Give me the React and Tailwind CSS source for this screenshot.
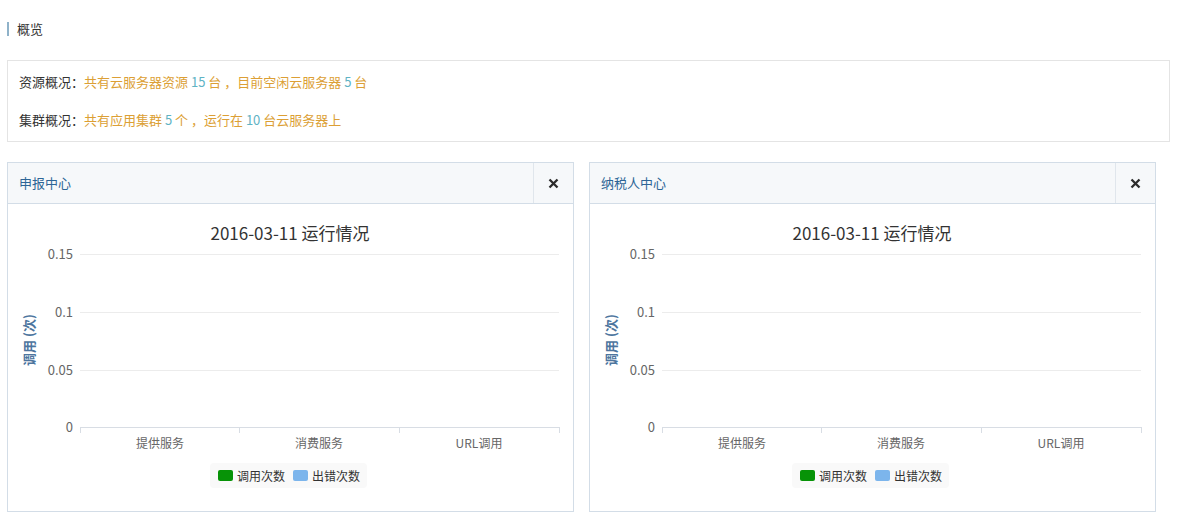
const FONT = '"Noto Sans CJK SC", "Noto Sans", sans-serif';

const categories = [
  { label: '提供服务', x: 152 },
  { label: '消费服务', x: 311 },
  { label: 'URL调用', x: 471 },
];

const yTicks = [
  { label: '0.15', y: 50 },
  { label: '0.1', y: 108 },
  { label: '0.05', y: 166 },
  { label: '0', y: 223 },
];

function RunChart() {
  return (
    <svg width="564" height="306" viewBox="0 0 564 306" style={{ fontFamily: FONT }}>
      <text x="282" y="36" textAnchor="middle" fontSize="17" fill="#333">
        2016-03-11 运行情况
      </text>

      {yTicks.slice(0, 3).map((t) => (
        <line key={t.label} x1="72" x2="551" y1={t.y + 0.5} y2={t.y + 0.5} stroke="#ececec" />
      ))}
      {yTicks.map((t) => (
        <text key={t.label} x="65" y={t.y + 5} textAnchor="end" fontSize="13" fill="#666">
          {t.label}
        </text>
      ))}

      <line x1="72" x2="551" y1="223.5" y2="223.5" stroke="#d8dde4" />
      {[72, 231, 391, 551].map((x) => (
        <line key={x} x1={x + 0.5} x2={x + 0.5} y1="223" y2="229" stroke="#d8dde4" />
      ))}
      {categories.map((c) => (
        <text key={c.label} x={c.x} y="244" textAnchor="middle" fontSize="12" fill="#666">
          {c.label}
        </text>
      ))}

      <text
        transform="translate(26 136) rotate(-90)"
        textAnchor="middle"
        fontSize="13"
        fontWeight="bold"
        fill="#4d759e"
      >
        调用 (次)
      </text>

      <rect x="202" y="259" width="157" height="25" rx="4" fill="#f9f9f9" />
      <rect x="210" y="266" width="15" height="11" rx="2" fill="#079307" />
      <text x="229" y="277" fontSize="12" fill="#333">调用次数</text>
      <rect x="285" y="266" width="15" height="11" rx="2" fill="#7cb5ec" />
      <text x="304" y="277" fontSize="12" fill="#333">出错次数</text>
    </svg>
  );
}

function Panel({ title }) {
  return (
    <div className="w-[567px] border border-[#d3dde7] bg-white">
      <div className="flex h-[41px] items-stretch justify-between border-b border-[#d3dde7] bg-[#f6f8fa]">
        <span className="flex items-center pl-[11px] text-[13px] text-[#2d6596]">{title}</span>
        <button className="flex w-[40px] items-center justify-center border-l border-[#e0e6ec]">
          <svg width="11" height="11" viewBox="0 0 11 11">
            <path d="M1.5 1.5 L9.5 9.5 M9.5 1.5 L1.5 9.5" stroke="#2b2b2b" strokeWidth="2.3" />
          </svg>
        </button>
      </div>
      <div className="h-[307px]">
        <RunChart />
      </div>
    </div>
  );
}

export default function App() {
  return (
    <div className="min-h-[525px] w-[1181px] bg-white pl-[7px] pt-[21px]" style={{ fontFamily: FONT }}>
      <div className="flex h-[15px] items-center">
        <span className="h-[14px] w-[2px] bg-[#8fb2c9]" />
        <span className="ml-[8px] text-[13px] leading-none text-[#333]">概览</span>
      </div>

      <div className="mt-[24px] flex w-[1163px] flex-col gap-[18px] border border-[#e4e4e4] px-[11px] pb-[11px] pt-[11px] text-[13px] leading-[20px]">
        <div>
          <span className="text-[#333]">资源概况：</span>
          <span className="text-[#dc9f35]">共有云服务器资源 </span>
          <span className="text-[#5fb3c4]">15</span>
          <span className="text-[#dc9f35]"> 台 ，目前空闲云服务器 </span>
          <span className="text-[#5fb3c4]">5</span>
          <span className="text-[#dc9f35]"> 台</span>
        </div>
        <div>
          <span className="text-[#333]">集群概况：</span>
          <span className="text-[#dc9f35]">共有应用集群 </span>
          <span className="text-[#5fb3c4]">5</span>
          <span className="text-[#dc9f35]"> 个 ，运行在 </span>
          <span className="text-[#5fb3c4]">10</span>
          <span className="text-[#dc9f35]"> 台云服务器上</span>
        </div>
      </div>

      <div className="mt-[20px] flex gap-[15px]">
        <Panel title="申报中心" />
        <Panel title="纳税人中心" />
      </div>
    </div>
  );
}
